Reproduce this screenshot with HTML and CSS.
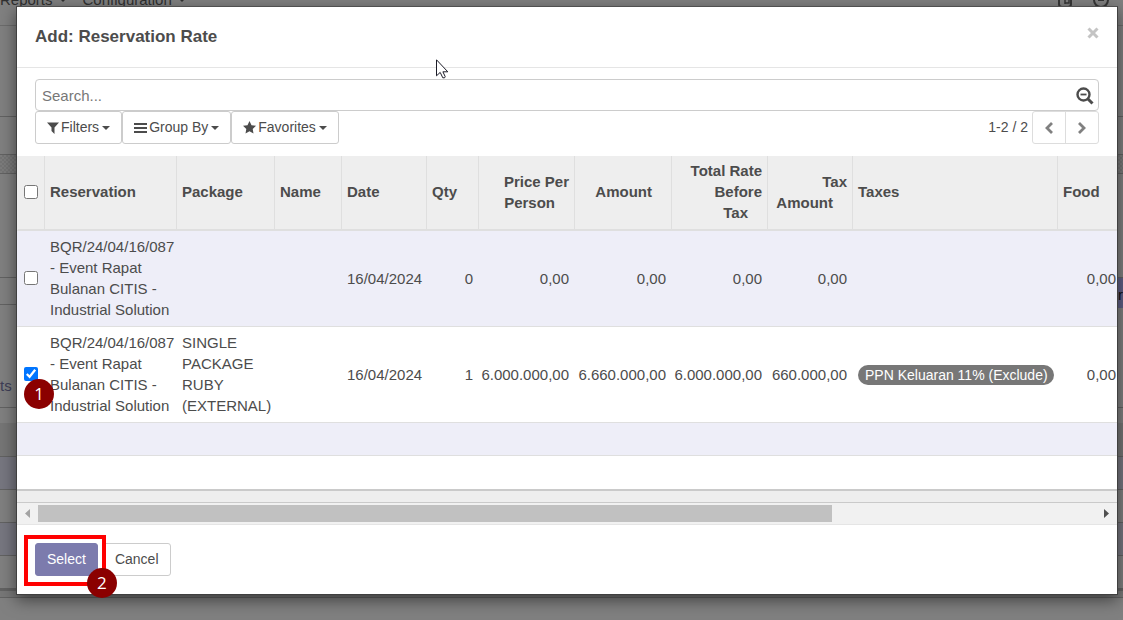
FILE: index.html
```html
<!DOCTYPE html>
<html lang="en">
<head>
<meta charset="utf-8">
<meta name="viewport" content="width=device-width, initial-scale=1">
<title>Add: Reservation Rate</title>
<link rel="stylesheet" href="styles.css">
</head>
<body>
<div class="page" aria-hidden="true">
  <div class="menu">
    <span>Reports</span><i class="caret"></i><span>Configuration</span><i class="caret"></i>
    <svg class="menu-icons" width="60" height="16" viewBox="0 0 60 16" fill="none" stroke="#363636" stroke-width="2"><rect x="4" y="3" width="12" height="12" rx="3"/><path d="M10 12V7h4v4h-4" stroke-width="1.5"/><circle cx="46" cy="8" r="7"/><path d="M43 8h6"/></svg>
  </div>
  <div class="strip s-control"></div>
  <div class="strip s-status"></div>
  <div class="strip s-hatch"></div>
  <div class="strip s-form"></div>
  <div class="strip s-button"><span>r</span></div>
  <div class="strip s-tabs"><span>ts</span></div>
  <div class="strip s-gap"></div>
  <div class="strip s-head"></div>
  <div class="strip s-odd"></div>
  <div class="strip s-even"></div>
  <div class="strip s-odd"></div>
  <div class="strip s-even"></div>
  <div class="strip s-foot"></div>
</div>

<main class="modal" role="dialog" aria-labelledby="title">
  <header class="modal-head">
    <h1 id="title">Add: Reservation Rate</h1>
    <button class="close" aria-label="Close"><svg width="12" height="12" viewBox="0 0 12 12" stroke="#c4c4c4" stroke-width="3"><path d="M1.5 1.5l9 9M10.5 1.5l-9 9"/></svg></button>
  </header>

  <section class="tools">
    <div class="search">
      <input type="text" placeholder="Search..." aria-label="Search">
      <button class="magnify" aria-label="Search options"><svg width="18" height="18" viewBox="0 0 18 18" fill="none" stroke="#4c4c4c"><circle cx="7.5" cy="7.5" r="6" stroke-width="2.4"/><path d="M4.5 7.5h6" stroke-width="1.8"/><path d="M12 12l4.500 4.500" stroke-width="3"/></svg></button>
    </div>
    <div class="options">
      <button class="btn"><svg width="12" height="12" viewBox="0 0 12 12"><path fill="#4c4c4c" d="M0 0.500h12L7.500 5.500V12L4.500 9V5.500z"/></svg>Filters<i class="caret"></i></button>
      <button class="btn"><svg width="13" height="12" viewBox="0 0 13 12"><path fill="#4c4c4c" d="M0 1h13v2H0zM0 5h13v2H0zM0 9h13v2H0z"/></svg>Group By<i class="caret"></i></button>
      <button class="btn"><svg width="13" height="13" viewBox="0 0 13 13"><path fill="#4c4c4c" d="M6.500 0l2 4.200 4.500.6-3.300 3.100.8 4.600-4-2.200-4 2.200.8-4.600L0 4.800l4.500-.6z"/></svg>Favorites<i class="caret"></i></button>
      <span class="count">1-2 / 2</span>
      <div class="pager">
        <button aria-label="Previous"><svg width="10" height="12" viewBox="0 0 10 12" fill="none" stroke="#808080" stroke-width="2.800"><path d="M8 1L3 6l5 5"/></svg></button>
        <button aria-label="Next"><svg width="10" height="12" viewBox="0 0 10 12" fill="none" stroke="#808080" stroke-width="2.800"><path d="M2 1l5 5-5 5"/></svg></button>
      </div>
    </div>
  </section>

  <div class="table-wrap">
    <table>
      <colgroup><col class="c-check"><col class="c-res"><col class="c-pack"><col class="c-name"><col class="c-date"><col class="c-qty"><col class="c-price"><col class="c-amount"><col class="c-price"><col class="c-date"><col><col class="c-food"></colgroup>
      <thead>
        <tr><th><input type="checkbox" aria-label="Select all"></th><th>Reservation</th><th>Package</th><th>Name</th><th>Date</th><th>Qty</th><th class="sort"><span>Price Per Person</span></th><th class="sort"><span>Amount</span></th><th class="sort"><span>Total Rate Before Tax</span></th><th class="sort"><span>Tax Amount</span></th><th>Taxes</th><th>Food</th></tr>
      </thead>
      <tbody>
        <tr><td><input type="checkbox" aria-label="Select row 1"></td><td>BQR/24/04/16/087 - Event Rapat Bulanan CITIS - Industrial Solution</td><td></td><td></td><td>16/04/2024</td><td class="num">0</td><td class="num">0,00</td><td class="num">0,00</td><td class="num">0,00</td><td class="num">0,00</td><td></td><td class="num">0,00</td></tr>
        <tr><td class="mark-cell"><input type="checkbox" checked aria-label="Select row 2"><b class="mark mark-one">1</b></td><td>BQR/24/04/16/087 - Event Rapat Bulanan CITIS - Industrial Solution</td><td>SINGLE PACKAGE RUBY (EXTERNAL)</td><td></td><td>16/04/2024</td><td class="num">1</td><td class="num">6.000.000,00</td><td class="num">6.660.000,00</td><td class="num">6.000.000,00</td><td class="num">660.000,00</td><td><span class="tag">PPN Keluaran 11% (Exclude)</span></td><td class="num">0,00</td></tr>
        <tr class="blank"><td colspan="12"></td></tr>
        <tr class="blank"><td colspan="12"></td></tr>
      </tbody>
      <tfoot><tr><td colspan="12"></td></tr></tfoot>
    </table>
  </div>
  <div class="scrollbar">
    <svg width="5" height="9" viewBox="0 0 5 9"><path fill="#a3a3a3" d="M5 0v9L0 4.500z"/></svg>
    <div class="track"><div class="thumb"></div></div>
    <svg width="5" height="9" viewBox="0 0 5 9"><path fill="#505050" d="M0 0v9l5-4.500z"/></svg>
  </div>

  <footer class="modal-foot">
    <span class="mark-cell"><button class="btn primary">Select</button><i class="frame"></i><b class="mark mark-two">2</b></span>
    <button class="btn">Cancel</button>
  </footer>
</main>
<svg class="pointer" width="13" height="20" viewBox="0 0 13 20"><path fill="#fff" stroke="#1c1c28" d="M.5.800v16l3.700-3.400 2.600 5.400h1.800l.6-1.200-2.300-4.800h4.900z"/></svg>
</body>
</html>
```
FILE: styles.css
```css
* { box-sizing: border-box; }
body { margin: 0; min-height: 100vh; overflow: hidden; background: #808080; color: #4c4c4c; font: 15px/21px "Liberation Sans", Arial, sans-serif; }
button, input { font: inherit; color: inherit; margin: 0; }
button { padding: 0; border: 0; background: none; }
svg { flex: none; }

.page { position: absolute; inset: 0; overflow: hidden; color: #303030; }
.menu { display: flex; align-items: center; gap: 6px; height: 26px; border-bottom: 1px solid #6c6c6c; }
.menu > * { margin-bottom: 26px; }
.menu .caret { margin-left: 0; margin-right: 10px; }
.menu .menu-icons { margin-left: auto; margin-right: 8px; }
.strip { border-bottom: 1px solid #626262; }
.s-control { height: 91px; }
.s-status { height: 38px; }
.s-hatch { height: 19px; background: repeating-conic-gradient(#747474 0 25%, #7c7c7c 0 50%) 0 0 / 4px 4px; }
.s-form { height: 104px; }
.s-button { height: 27px; display: flex; justify-content: flex-end; }
.s-button span { width: 6px; height: 30px; padding-top: 6px; background: #5f5f85; color: #111; text-align: right; }
.s-tabs { height: 103px; padding-top: 70px; color: #3e3e57; }
.s-gap { height: 15px; border: 0; }
.s-head { height: 34px; background: #767676; }
.s-odd { height: 33px; background: #777780; }
.s-even { height: 33px; }
.s-foot { height: 9px; background: #777; border-top: 2px solid #626262; }

.modal { position: relative; margin: 6px 5px 0 16px; border: 1px solid #404040; border-top-color: #505050; background: #fff; box-shadow: 0 5px 15px rgba(0, 0, 0, .5); }
.modal-head { display: flex; justify-content: space-between; align-items: flex-start; height: 61px; padding: 19px 18px; border-bottom: 1px solid #e5e5e5; }
h1 { margin: 0; font-size: 17px; line-height: 21px; }
.close { display: flex; padding-top: 1px; }

.tools { padding: 11px 18px 12px; }
.search { display: flex; align-items: center; height: 32px; padding: 0 4px 0 6px; border: 1px solid #ccc; border-radius: 4px; }
.search input { flex: 1; min-width: 0; padding: 0; border: 0; outline: 0; background: none; }
.search input::placeholder { color: #777; opacity: 1; }
.magnify { display: flex; padding-top: 2px; }
.options { display: flex; align-items: center; }
.btn { display: flex; align-items: center; height: 33px; padding: 0 11px; border: 1px solid #ccc; border-radius: 3px; background: #fff; font-size: 14px; }
.btn svg { margin-right: 2px; }
.caret { margin-left: 3px; border: 4px solid transparent; border-top-color: currentColor; border-bottom: 0; }
.count { margin: 0 4px 0 auto; font-size: 14px; }
.pager { display: flex; height: 33px; border: 1px solid #ddd; border-radius: 3px; }
.pager button { display: flex; align-items: center; justify-content: center; width: 32px; }
.pager button:first-child { width: 33px; border-right: 1px solid #ddd; }

.table-wrap { overflow-x: hidden; }
table { width: calc(100% + 4px); border-collapse: separate; border-spacing: 0; table-layout: fixed; }
.c-check { width: 27px; }
.c-res { width: 132px; }
.c-pack { width: 98px; }
.c-name { width: 67px; }
.c-date { width: 85px; }
.c-qty { width: 52px; }
.c-price { width: 96px; }
.c-amount { width: 97px; }
.c-food { width: 64px; }
th { height: 75px; padding: 4px 5px 6px; border-left: 1px solid #dfdfdf; border-bottom: 2px solid #dfdfdf; background: #eee; text-align: left; }
th:first-child { border-left-color: #eee; padding-left: 6px; }
.sort { text-align: right; }
.sort span { padding-right: 14px; }
td { height: 96px; padding: 5px 0 6px 6px; border-bottom: 1px solid #dfdfdf; }
td:first-child { padding-left: 7px; }
td.num { padding: 5px 5px 6px 0; text-align: right; white-space: nowrap; }
tbody tr:nth-child(odd) { background: #eeeef8; }
tbody .blank td { height: 33px; }
tbody tr:last-child td { border: 0; }
tfoot td { height: 14px; padding: 0; border-top: 2px solid #cacaca; border-bottom: 1px solid #cacaca; background: #eee; }
input[type="checkbox"] { display: block; width: 14px; height: 14px; }
.tag { display: inline-block; padding: 0 6px 0 7px; border-radius: 10px; background: #777; color: #fff; font-size: 14px; line-height: 20px; white-space: nowrap; }

.scrollbar { display: flex; align-items: center; height: 22px; padding: 0 8px; gap: 8px; border-bottom: 1px solid #e5e5e5; background: #f1f1f1; }
.track { flex: 1; }
.thumb { width: 75%; height: 17px; background: #c1c1c1; }
.modal-foot { display: flex; gap: 5px; padding: 18px; }
.primary { border-color: #7c7bad; background: #7c7bad; color: #fff; }

.mark-cell { position: relative; }
.mark { position: absolute; z-index: 2; width: 30px; height: 30px; border-radius: 50%; background: #8b0000; color: #fff; font: 17px/30px "Open Sans", sans-serif; text-align: center; }
.mark-one { left: 7px; top: 52px; }
.mark-two { right: -19px; top: 25px; }
.frame { position: absolute; inset: -8px -8px -10px -11px; border: 4px solid #f00; }
.pointer { position: absolute; left: 436px; top: 59px; }
```
